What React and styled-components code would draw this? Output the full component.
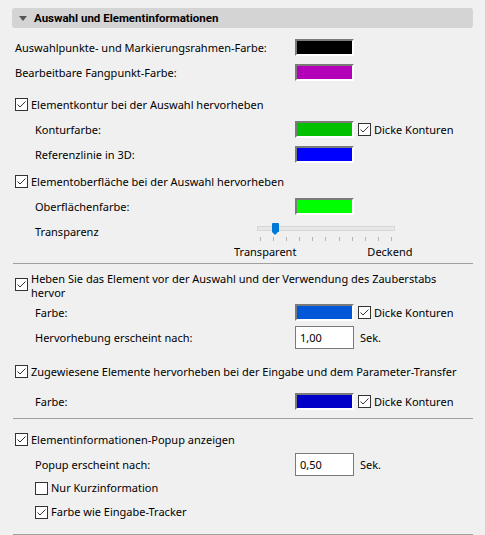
import React from "react";
import styled, { createGlobalStyle } from "styled-components";

const GlobalStyle = createGlobalStyle`
  html, body {
    margin: 0;
    padding: 0;
    background: #f0f0f0;
  }
  body {
    font-family: "Noto Sans", "Open Sans", sans-serif;
    font-size: 11px;
    color: #000000;
  }
`;

const Panel = styled.div`
  width: 485px;
  height: 535px;
  box-sizing: border-box;
  padding: 8px 12px 0 13px;
  display: flex;
  flex-direction: column;
  overflow: hidden;
`;

const Header = styled.div`
  height: 21px;
  margin-left: -1px;
  border-radius: 3px;
  background: #d4d4d4;
  display: flex;
  align-items: center;
  gap: 7px;
  padding-left: 7px;
  font-family: Roboto, "Noto Sans", sans-serif;
  font-weight: 700;
  font-size: 11.5px;
`;

const Triangle = styled.span`
  width: 0;
  height: 0;
  border-left: 4px solid transparent;
  border-right: 4px solid transparent;
  border-top: 5px solid #555;
  margin-top: 1px;
`;

const Row = styled.div`
  height: ${p => p.$h || 25}px;
  margin-top: ${p => p.$mt || 0}px;
  padding-left: ${p => (p.$indent || 0) + 2}px;
  display: flex;
  align-items: center;
  flex-shrink: 0;
`;

const Label = styled.span`
  flex: 0 0 ${p => 280 - (p.$indent || 0)}px;
  white-space: nowrap;
`;

const Swatch = styled.div`
  width: 55px;
  height: 13px;
  border: 2px solid;
  border-color: #7a7a7a #ffffff #ffffff #7a7a7a;
  background: ${p => p.$color};
  flex-shrink: 0;
`;

const NumberBox = styled.div`
  width: 53px;
  height: 21px;
  border: 1px solid #7a7a7a;
  background: #ffffff;
  display: flex;
  align-items: center;
  padding-left: 4px;
  flex-shrink: 0;
`;

const Unit = styled.span`
  margin-left: 6px;
`;

const CheckLine = styled.label`
  display: flex;
  align-items: ${p => (p.$multi ? "flex-start" : "center")};
  gap: 3px;
  margin-left: ${p => p.$ml || 0}px;
  line-height: ${p => (p.$multi ? 14 : 16)}px;
  white-space: nowrap;
`;

const Box = styled.span`
  width: 11px;
  height: 11px;
  border: 1px solid #333333;
  background: #ffffff;
  display: flex;
  align-items: center;
  justify-content: center;
  flex-shrink: 0;
  margin-top: ${p => (p.$multi ? 6 : 0)}px;
`;

const Separator = styled.div`
  height: 1px;
  background: #a0a0a0;
  margin-top: ${p => p.$mt || 0}px;
  flex-shrink: 0;
`;

const SliderArea = styled.div`
  width: 138px;
  margin-left: -38px;
  margin-top: 4px;
  display: flex;
  flex-direction: column;
`;

const Track = styled.div`
  position: relative;
  height: 3px;
  background: #e7e7e7;
  border: 1px solid #d6d6d6;
`;

const Thumb = styled.div`
  position: absolute;
  left: ${p => p.$pos}px;
  top: -4px;
  width: 7px;
  height: 9px;
  background: #0078d7;
  border-radius: 1px 1px 0 0;
  &::after {
    content: "";
    position: absolute;
    left: 0;
    top: 9px;
    border-left: 3.5px solid transparent;
    border-right: 3.5px solid transparent;
    border-top: 3px solid #0078d7;
  }
`;

const Ticks = styled.div`
  display: flex;
  justify-content: space-between;
  padding: 0 3px;
  margin-top: 6px;
`;

const Tick = styled.span`
  width: 1px;
  height: 4px;
  background: #b4b4b4;
`;

const ScaleLabels = styled.div`
  height: 14px;
  display: flex;
  padding-left: 221px;
  flex-shrink: 0;
  & span:last-child {
    margin-left: 71px;
  }
`;

function Check({ checked = true, multi, ml, children }) {
  return (
    <CheckLine $multi={multi} $ml={ml}>
      <Box $multi={multi}>
        {checked && (
          <svg width="11" height="11" viewBox="0 0 11 11">
            <polyline points="1.5,5.5 4,8 9.5,2.5" fill="none" stroke="#333" strokeWidth="1" />
          </svg>
        )}
      </Box>
      <span>{children}</span>
    </CheckLine>
  );
}

function ColorRow({ label, color, indent, mt, thick }) {
  return (
    <Row $indent={indent} $mt={mt}>
      <Label $indent={indent}>{label}</Label>
      <Swatch $color={color} />
      {thick && <Check ml={4}>Dicke Konturen</Check>}
    </Row>
  );
}

export default function App() {
  return (
    <>
      <GlobalStyle />
      <Panel>
        <Header>
          <Triangle />
          Auswahl und Elementinformationen
        </Header>

        <ColorRow mt={7} label="Auswahlpunkte- und Markierungsrahmen-Farbe:" color="#000000" />
        <ColorRow label="Bearbeitbare Fangpunkt-Farbe:" color="#b400b8" />

        <Row $mt={7}>
          <Check>Elementkontur bei der Auswahl hervorheben</Check>
        </Row>
        <ColorRow indent={20} label="Konturfarbe:" color="#00c000" thick />
        <ColorRow indent={20} label="Referenzlinie in 3D:" color="#0000ff" />

        <Row $mt={2}>
          <Check>Elementoberfläche bei der Auswahl hervorheben</Check>
        </Row>
        <ColorRow indent={20} label="Oberflächenfarbe:" color="#00ff00" />
        <Row $indent={20}>
          <Label $indent={20}>Transparenz</Label>
          <SliderArea>
            <Track>
              <Thumb $pos={14} />
            </Track>
            <Ticks>
              {Array.from({ length: 11 }).map((_, i) => (
                <Tick key={i} />
              ))}
            </Ticks>
          </SliderArea>
        </Row>
        <ScaleLabels>
          <span>Transparent</span>
          <span>Deckend</span>
        </ScaleLabels>

        <Separator $mt={5} />

        <Row $h={29} $mt={7}>
          <Check multi>
            Heben Sie das Element vor der Auswahl und der Verwendung des Zauberstabs
            <br />
            hervor
          </Check>
        </Row>
        <ColorRow indent={20} label="Farbe:" color="#0058d8" thick />
        <Row $indent={20}>
          <Label $indent={20}>Hervorhebung erscheint nach:</Label>
          <NumberBox>1,00</NumberBox>
          <Unit>Sek.</Unit>
        </Row>

        <Row $mt={9}>
          <Check>Zugewiesene Elemente hervorheben bei der Eingabe und dem Parameter-Transfer</Check>
        </Row>
        <ColorRow indent={20} mt={5} label="Farbe:" color="#0000c8" thick />

        <Separator $mt={4} />

        <Row $mt={8}>
          <Check>Elementinformationen-Popup anzeigen</Check>
        </Row>
        <Row $indent={20}>
          <Label $indent={20}>Popup erscheint nach:</Label>
          <NumberBox>0,50</NumberBox>
          <Unit>Sek.</Unit>
        </Row>
        <Row $indent={20} $h={24} $mt={-1}>
          <Check checked={false}>Nur Kurzinformation</Check>
        </Row>
        <Row $indent={20} $h={24}>
          <Check>Farbe wie Eingabe-Tracker</Check>
        </Row>

        <Separator $mt={10} />
      </Panel>
    </>
  );
}
